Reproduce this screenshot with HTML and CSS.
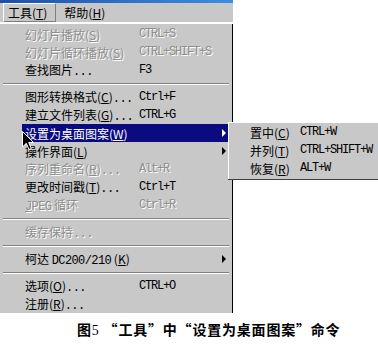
FILE: index.html
```html
<!DOCTYPE html>
<html lang="zh-CN">
<head>
    <meta charset="UTF-8">
    <meta name="viewport" content="width=device-width, initial-scale=1.0">
    <title>工具菜单</title>
    <link rel="stylesheet" href="styles.css">
</head>
<body>
    <div class="screen">
        <div class="title-line"></div>
        <div class="menubar">
            <span class="bar-item active">工具(<u>T</u>)</span>
            <span class="bar-item">帮助(<u>H</u>)</span>
        </div>
        <div class="bar-gap"></div>

        <div class="menu">
            <div class="row disabled"><span>幻灯片播放(<u>S</u>)</span><span class="key">CTRL+S</span></div>
            <div class="row disabled"><span>幻灯片循环播放(<u>S</u>)</span><span class="key">CTRL+SHIFT+S</span></div>
            <div class="row"><span>查找图片<span class="mono">...</span></span><span class="key">F3</span></div>
            <div class="sep"></div>
            <div class="row"><span>图形转换格式(<u>C</u>)<span class="mono">...</span></span><span class="key">Ctrl+F</span></div>
            <div class="row"><span>建立文件列表(<u>G</u>)<span class="mono">...</span></span><span class="key">CTRL+G</span></div>
            <div class="row selected"><span>设置为桌面图案(<u>W</u>)</span><span class="key"></span><span class="arrow"></span></div>
            <div class="row"><span>操作界面(<u>L</u>)</span><span class="key"></span><span class="arrow"></span></div>
            <div class="row disabled"><span>序列重命名(<u>R</u>)<span class="mono">...</span></span><span class="key">Alt+R</span></div>
            <div class="row"><span>更改时间戳(<u>T</u>)<span class="mono">...</span></span><span class="key">Ctrl+T</span></div>
            <div class="row disabled"><span><u class="mono">J</u><span class="mono">PEG</span> 循环</span><span class="key">Ctrl+R</span></div>
            <div class="sep"></div>
            <div class="row disabled"><span>缓存保持<span class="mono">...</span></span><span class="key"></span></div>
            <div class="sep"></div>
            <div class="row"><span>柯达 <span class="mono">DC200/210</span> (<u>K</u>)</span><span class="key"></span><span class="arrow"></span></div>
            <div class="sep"></div>
            <div class="row"><span>选项(<u>O</u>)<span class="mono">...</span></span><span class="key">CTRL+O</span></div>
            <div class="row"><span>注册(<u>R</u>)<span class="mono">...</span></span><span class="key"></span></div>
        </div>

        <div class="submenu">
            <div class="sub-row"><span>置中(<u>C</u>)</span><span class="key">CTRL+W</span></div>
            <div class="sub-row"><span>并列(<u>T</u>)</span><span class="key">CTRL+SHIFT+W</span></div>
            <div class="sub-row"><span>恢复(<u>R</u>)</span><span class="key">ALT+W</span></div>
        </div>

        <svg class="pointer" width="13" height="20" viewBox="0 0 13 20">
            <path d="M0.5 0.5 L0.5 16 L4.3 12.3 L7 18.5 L9.3 17.5 L6.7 11.5 L11.5 11.5 Z" fill="#000" stroke="#fff" stroke-width="1"/>
        </svg>

        <p class="caption">图<span class="num">5</span> “工具”中“设置为桌面图案”命令</p>
    </div>
</body>
</html>
```

FILE: styles.css
```css
body {
    margin: 0;
    background: #fff;
    font-family: "Noto Sans CJK SC", sans-serif;
    font-size: 12px;
    color: #000;
}
.screen {
    position: relative;
    width: 378px;
    height: 344px;
}
.title-line {
    width: 233px;
    height: 3px;
    background: linear-gradient(to right, #1d4fa6, #3c8ee0);
}
.menubar {
    display: flex;
    width: 233px;
    height: 19px;
    background: #c8c8c8;
    align-items: center;
}
.bar-item {
    line-height: 17px;
    padding: 0 4px;
    margin-left: 3px;
    border: 1px solid transparent;
}
.bar-item.active {
    border-color: #fff #808080 #808080 #fff;
    padding-right: 8px;
}
.bar-gap {
    height: 2px;
}
.menu {
    width: 229px;
    padding: 1px 3px 0 0;
    background: #c8c8c8;
    border-right: 1px solid #000;
}
.row {
    display: grid;
    grid-template-columns: 114px 1fr 7px;
    align-items: center;
    height: 18px;
    margin-left: 22px;
    padding-left: 3px;
    white-space: nowrap;
}
.row.selected {
    background: #0b0b80;
    color: #fff;
}
.row.disabled {
    color: #8e8e8e;
    text-shadow: 1px 1px 0 #fff;
}
.key, .mono {
    font-family: "Liberation Mono", monospace;
    font-size: 12px;
    letter-spacing: -1.2px;
}
.mono {
    letter-spacing: -0.6px;
}
.arrow {
    width: 0;
    height: 0;
    border-top: 4px solid transparent;
    border-bottom: 4px solid transparent;
    border-left: 4px solid #000;
}
.row.selected .arrow {
    border-left-color: #fff;
}
.sep {
    height: 9px;
    margin-left: 3px;
    display: flex;
    flex-direction: column;
    justify-content: center;
}
.sep::before {
    content: "";
    display: block;
    border-top: 1px solid #808080;
    border-bottom: 1px solid #fff;
}
.submenu {
    position: absolute;
    left: 228px;
    top: 122px;
    width: 149px;
    padding: 0 0 2px 0;
    background: #c8c8c8;
    border-left: 1px solid #fff;
    border-top: 1px solid #fff;
    box-shadow: 0 1px 0 #404040;
}
.sub-row {
    display: grid;
    grid-template-columns: 50px 1fr;
    align-items: center;
    height: 18px;
    padding-left: 21px;
    white-space: nowrap;
}
.pointer {
    position: absolute;
    left: 22px;
    top: 131px;
}
.caption {
    margin: 0;
    position: absolute;
    left: 77px;
    top: 321px;
    font-size: 14px;
    line-height: 17px;
    font-weight: bold;
    letter-spacing: 0.8px;
    white-space: nowrap;
}
.num {
    font-family: "Liberation Serif", serif;
    font-weight: normal;
}
```
